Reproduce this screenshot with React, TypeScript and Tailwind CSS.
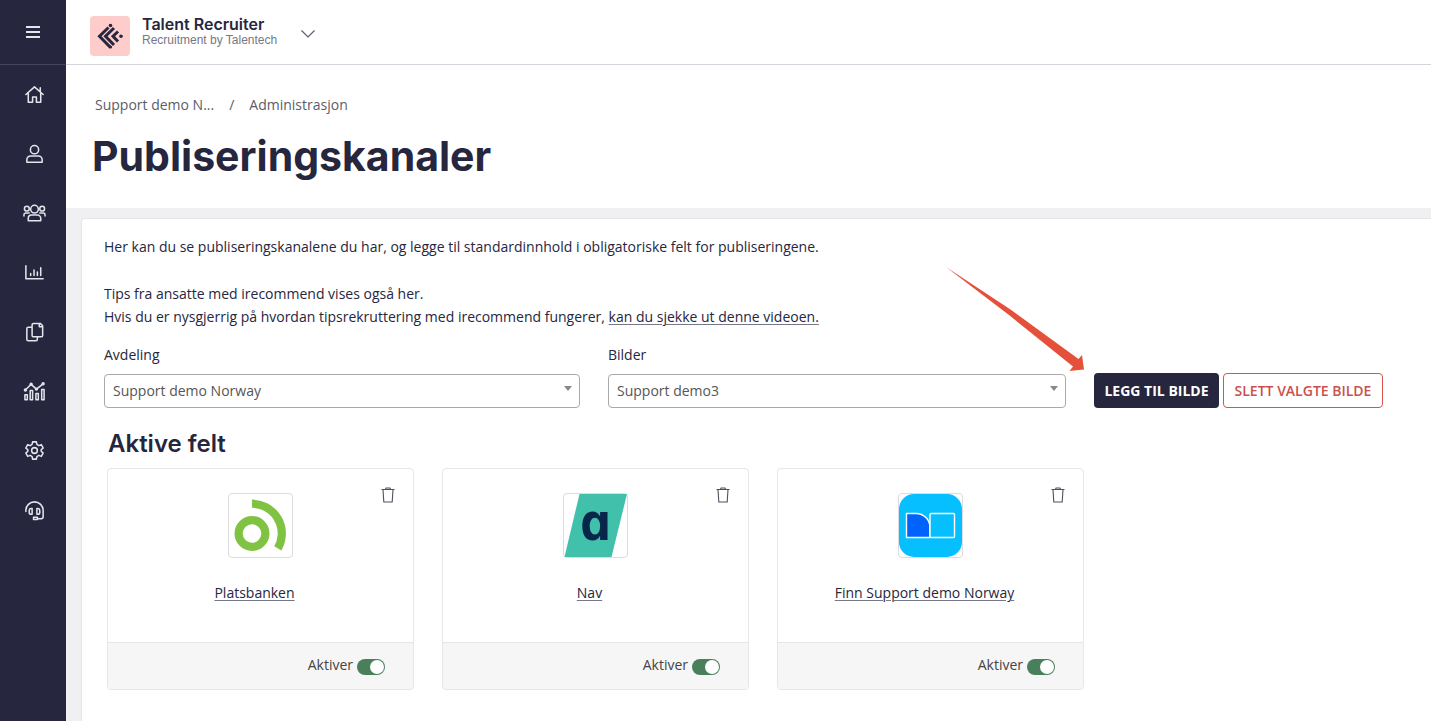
import type { ReactNode } from "react";

function Icon({ children }: { children: ReactNode }) {
  return (
    <svg
      viewBox="0 0 24 24"
      className="h-[23px] w-[23px]"
      fill="none"
      stroke="currentColor"
      strokeWidth="1.600"
      strokeLinecap="round"
      strokeLinejoin="round"
      aria-hidden="true"
    >
      {children}
    </svg>
  );
}

const navItems = [
  {
    label: "Hjem",
    icon: (
      <Icon>
        <path d="M3 12 12 4l9 8M18 5v4M5.500 10.500V20H10v-5.500h4V20h4.500v-9.500" />
      </Icon>
    ),
  },
  {
    label: "Kandidat",
    icon: (
      <Icon>
        <circle cx="12" cy="7" r="4.300" />
        <path d="M8 13.500h8a4 4 0 0 1 4 4V20H4v-2.500a4 4 0 0 1 4-4Z" />
      </Icon>
    ),
  },
  {
    label: "Grupper",
    icon: (
      <Icon>
        <circle cx="12" cy="7.500" r="4" />
        <circle cx="4" cy="7" r="2.500" />
        <circle cx="20" cy="7" r="2.500" />
        <path d="M9 13.500h6a3.500 3.500 0 0 1 3.500 3.500v2.500h-13V17A3.500 3.500 0 0 1 9 13.500ZM1 14.500v-1a2 2 0 0 1 2-2h3.500M23 14.500v-1a2 2 0 0 0-2-2h-3.500" />
      </Icon>
    ),
  },
  {
    label: "Statistikk",
    icon: (
      <Icon>
        <path d="M3 5V18.500h18M8 13v2M11.500 9.500V15M15 11.500V15M18.500 7v8" />
      </Icon>
    ),
  },
  {
    label: "Dokumenter",
    icon: (
      <Icon>
        <path d="M11 2.500h7l2.500 2.500v10a1.500 1.500 0 0 1-1.500 1.500h-8A1.500 1.500 0 0 1 9.500 15V4A1.500 1.500 0 0 1 11 2.500ZM17 2.500v3.500h3.500M9.500 6.500h-4A1.500 1.500 0 0 0 4 8v11a1.500 1.500 0 0 0 1.500 1.500h8A1.500 1.500 0 0 0 15 19v-2.500" />
      </Icon>
    ),
  },
  {
    label: "Rapporter",
    icon: (
      <Icon>
        <path d="m2.500 10.500 6-6 5.500 5 7-5.500" />
        <circle cx="2.500" cy="10.500" r="1" />
        <circle cx="8.500" cy="4.500" r="1" />
        <circle cx="14" cy="9.500" r="1" />
        <circle cx="21" cy="4" r="1" />
        <path d="M2 15.500h2.500v5H2ZM7.500 11H10v9.500H7.500ZM13.500 14H16v6.500h-2.500ZM19.500 10H22v10.500h-2.500Z" />
      </Icon>
    ),
  },
  {
    label: "Innstillinger",
    icon: (
      <Icon>
        <circle cx="12" cy="12" r="3" />
        <path d="M10 3h4l.5 2.700 2 1.200 2.600-1 2 3.500-2.100 1.700v1.800l2.100 1.700-2 3.500-2.600-1-2 1.200L14 21h-4l-.5-2.700-2-1.200-2.600 1-2-3.500L5 12.900v-1.800L2.900 9.400l2-3.500 2.600 1 2-1.200Z" />
      </Icon>
    ),
  },
  {
    label: "Support",
    icon: (
      <Icon>
        <path d="M3 13v-1a9 9 0 0 1 18 0v6.500a2 2 0 0 1-2 2h-4M11 19h4v2.500h-4ZM9.500 10v6H8.500a2 2 0 0 1-2-2v-2a2 2 0 0 1 2-2ZM14.500 10h1a2 2 0 0 1 2 2v2a2 2 0 0 1-2 2h-1Z" />
      </Icon>
    ),
  },
];

function Sidebar() {
  return (
    <aside className="w-[66px] shrink-0 bg-[#26263e] text-[#e4e4ec]">
      <div className="flex h-[65px] items-center justify-center border-b border-[#45455f]">
        <button type="button" aria-label="Meny">
          <svg viewBox="0 0 14 12" className="h-3 w-3.5" stroke="currentColor" strokeWidth="2" aria-hidden="true">
            <path d="M0 1h14M0 6h14M0 11h14" />
          </svg>
        </button>
      </div>
      <nav className="grid h-[475px] auto-rows-fr pl-0.5">
        {navItems.map((item) => (
          <a key={item.label} href="#" aria-label={item.label} className="flex items-center justify-center">
            {item.icon}
          </a>
        ))}
      </nav>
    </aside>
  );
}

function Header() {
  return (
    <header className="flex h-[65px] items-center border-b border-[#d4d4dc] bg-white pl-6">
      <svg viewBox="0 0 40 40" className="mt-2 h-10 w-10" aria-hidden="true">
        <rect width="40" height="40" rx="4" fill="#ffcccc" />
        <g fill="none" stroke="#26263e" strokeWidth="3">
          <path d="m18.500 11.500-9 8.700 11 11.300" />
          <path d="m24 12-8.500 8.200 8.500 8.800" />
          <path d="m28 15.500-5 4.700 5 5.300" />
        </g>
        <g fill="#26263e">
          <circle cx="20.500" cy="9.500" r="1.800" />
          <circle cx="31" cy="20.200" r="1.800" />
          <circle cx="20.500" cy="31" r="1.600" />
        </g>
      </svg>
      <div className="ml-3">
        <div className="font-['Inter',sans-serif] text-base leading-4 font-semibold">Talent Recruiter</div>
        <div className="font-['Liberation_Sans',sans-serif] text-xs leading-4 text-[#777785]">
          Recruitment by Talentech
        </div>
      </div>
      <button type="button" aria-label="Bytt produkt" className="mt-1 ml-6">
        <svg viewBox="0 0 14 8" className="h-2 w-3.5" fill="none" stroke="#5c5c70" strokeWidth="1.200" aria-hidden="true">
          <path d="m.5.5 6.500 6.500L13.500.5" />
        </svg>
      </button>
    </header>
  );
}

function SelectField({ id, label, value }: { id: string; label: string; value: string }) {
  return (
    <div>
      <label htmlFor={id} className="block leading-[22px]">
        {label}
      </label>
      <div className="relative mt-2">
        <select
          id={id}
          className="block h-[34px] w-full appearance-none rounded-[4px] border border-[#aaa] bg-white px-2 text-[#555]"
        >
          <option>{value}</option>
        </select>
        <svg viewBox="0 0 8 5" className="pointer-events-none absolute top-3 right-2 h-[5px] w-2" aria-hidden="true">
          <path d="M0 0h8L4 5Z" fill="#888" />
        </svg>
      </div>
    </div>
  );
}

function PlatsbankenLogo() {
  return (
    <svg viewBox="0 0 63 63" className="h-full w-full" fill="none" stroke="#80c342" strokeWidth="8.200" aria-hidden="true">
      <circle cx="23" cy="39.500" r="13.400" />
      <path d="M23 9.700a29.800 29.800 0 0 1 25.800 44.700" />
    </svg>
  );
}

function NavLogo() {
  return (
    <svg viewBox="0 0 63 63" className="h-full w-full overflow-visible" aria-hidden="true">
      <path d="M15.500 0H63L47.500 63H.5Z" fill="#41c1ac" />
      <text
        x="31"
        y="46"
        textAnchor="middle"
        fill="#06264a"
        className="font-['DejaVu_Sans_Mono',monospace] text-[52px] font-bold"
      >
        ɑ
      </text>
    </svg>
  );
}

function FinnLogo() {
  return (
    <svg viewBox="0 0 63 63" className="h-full w-full" aria-hidden="true">
      <rect width="63" height="63" rx="15" fill="#06bfff" />
      <g stroke="#fff" strokeWidth="1.400" strokeLinejoin="round">
        <path d="M7.500 19.500h9.500a14 14 0 0 1 14 14v10H7.500Z" fill="#0063fb" />
        <rect x="31" y="19.500" width="24.500" height="24" rx="1" fill="#06bfff" />
      </g>
    </svg>
  );
}

const channels = [
  { id: "platsbanken", name: "Platsbanken", logo: <PlatsbankenLogo /> },
  { id: "nav", name: "Nav", logo: <NavLogo /> },
  { id: "finn", name: "Finn Support demo Norway", logo: <FinnLogo /> },
];

function ChannelCard({ id, name, logo }: (typeof channels)[number]) {
  return (
    <article className="relative w-[307px] rounded-[4px] border border-[#e6e6e8] bg-white">
      <div className="flex h-[173px] flex-col items-center pt-6">
        <div className="h-[65px] w-[65px] rounded-[4px] border border-[#dcdce0]">{logo}</div>
        <a
          href="#"
          className="mt-6 mr-3 leading-[22px] underline decoration-[#77778a] decoration-1 underline-offset-2"
        >
          {name}
        </a>
      </div>
      <button type="button" aria-label={`Slett ${name}`} className="absolute top-[18px] right-[18px]">
        <svg
          viewBox="0 0 14 16"
          className="h-4 w-3.5"
          fill="none"
          stroke="#4f4f60"
          strokeWidth="1.100"
          strokeLinejoin="round"
          aria-hidden="true"
        >
          <path d="M.5 2.500h13M4.500 2.500 5 1h4l.5 1.500M2 2.500l.8 12.500h8.400L12 2.500" />
        </svg>
      </button>
      <div className="flex h-[47px] items-center justify-end gap-1 rounded-b-[4px] border-t border-[#e6e6e8] bg-[#f6f6f6] pt-0.5 pr-7">
        <label htmlFor={id} className="pb-1 leading-[22px] text-[#444]">
          Aktiver
        </label>
        <input
          id={id}
          type="checkbox"
          role="switch"
          defaultChecked
          className="flex h-4 w-7 appearance-none items-center rounded-full bg-[#aaa] p-px before:h-3.5 before:w-3.5 before:rounded-full before:bg-white checked:justify-end checked:bg-[#4a7f5c]"
        />
      </div>
    </article>
  );
}

// Points at the button that adds a picture
function Arrow() {
  return (
    <svg
      viewBox="0 0 140 106"
      className="pointer-events-none absolute bottom-[35px] -left-[149px] h-[106px] w-[140px]"
      aria-hidden="true"
    >
      <path d="M1 0 67 43.500 133.500 92l3.500-4 2 14.500-14.500 1.500 3.500-4.500L64 48Z" fill="#e5503a" />
    </svg>
  );
}

export default function App() {
  return (
    <div className="flex min-h-screen bg-[#f0f0f2] font-['Open_Sans',sans-serif] text-sm text-[#26263e]">
      <Sidebar />
      <div className="min-w-0 flex-1">
        <Header />
        <div className="h-[143px] bg-white pt-[29px]">
          <nav aria-label="Brødsmuler" className="flex gap-[15px] pl-[29px] leading-[22px] text-[#5c5c68]">
            <a href="#">Support demo N...</a>
            <span>/</span>
            <a href="#">Administrasjon</a>
          </nav>
          <h1 className="mt-4 pl-[26px] font-['Inter',sans-serif] text-[41px] leading-[48px] font-bold">
            Publiseringskanaler
          </h1>
        </div>

        <main className="mt-2.5 ml-[15px] min-h-[503px] rounded-tl-[4px] border-t border-l border-[#e6e6e8] bg-white pt-4 pr-12 pb-7 pl-[22px]">
          <p className="leading-[23px]">
            Her kan du se publiseringskanalene du har, og legge til standardinnhold i obligatoriske felt for
            publiseringene.
          </p>
          <p className="mt-6 leading-[23px]">
            Tips fra ansatte med irecommend vises også her.
            <br />
            Hvis du er nysgjerrig på hvordan tipsrekruttering med irecommend fungerer,{" "}
            <a href="#" className="underline decoration-[#77778a] decoration-1 underline-offset-2">
              kan du sjekke ut denne videoen.
            </a>
          </p>

          <div className="mt-4 grid grid-cols-[476fr_458fr_auto] items-end gap-7">
            <SelectField id="avdeling" label="Avdeling" value="Support demo Norway" />
            <SelectField id="bilder" label="Bilder" value="Support demo3" />
            <div className="relative flex gap-1">
              <Arrow />
              <button
                type="button"
                className="h-[35px] w-[125px] rounded-[4px] bg-[#26263e] font-bold whitespace-nowrap text-white"
              >
                LEGG TIL BILDE
              </button>
              <button
                type="button"
                className="h-[35px] w-[160px] rounded-[4px] border border-[#d9534f] font-semibold whitespace-nowrap text-[#c9504d]"
              >
                SLETT VALGTE BILDE
              </button>
            </div>
          </div>

          <h2 className="mt-5 pl-1 font-['Inter',sans-serif] text-2xl leading-8 font-semibold">Aktive felt</h2>
          <div className="mt-2 flex flex-wrap gap-7 pl-[3px]">
            {channels.map((channel) => (
              <ChannelCard key={channel.id} {...channel} />
            ))}
          </div>
        </main>
      </div>
    </div>
  );
}
